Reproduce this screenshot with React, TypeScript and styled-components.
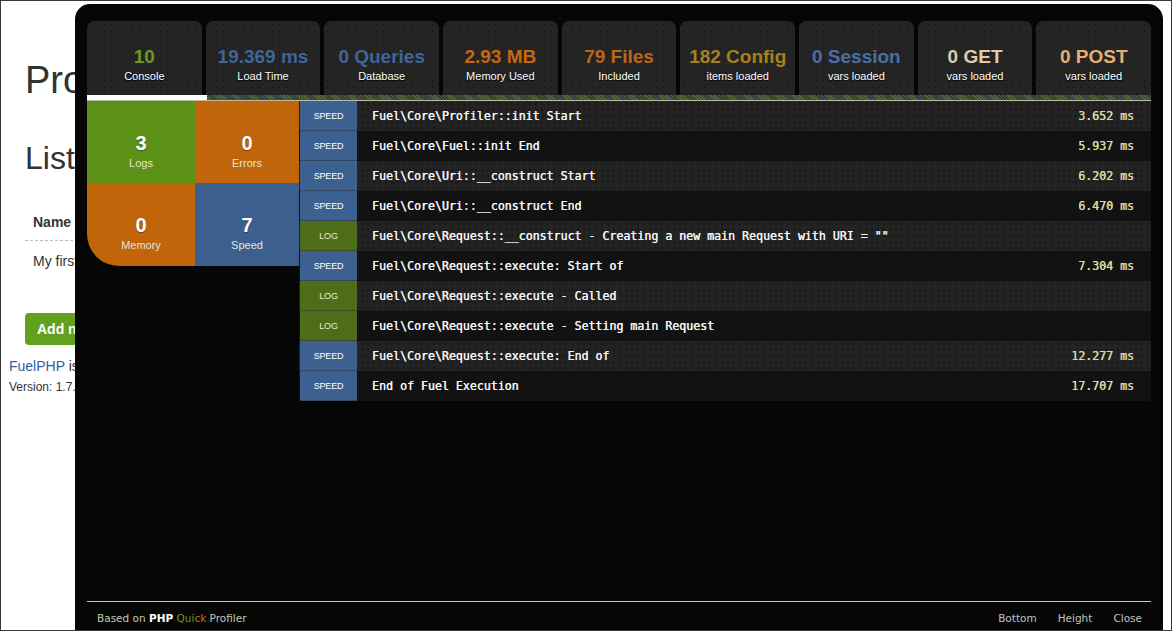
import React from 'react'
import styled, { createGlobalStyle } from 'styled-components'

type Entry = {
  kind: 'SPEED' | 'LOG'
  text: string
  time?: string
}

type Tab = {
  value: string
  label: string
  color: string
}

const tabs: Tab[] = [
  { value: '10', label: 'Console', color: '#6a9a1c' },
  { value: '19.369 ms', label: 'Load Time', color: '#3f6599' },
  { value: '0 Queries', label: 'Database', color: '#3f6599' },
  { value: '2.93 MB', label: 'Memory Used', color: '#c4690d' },
  { value: '79 Files', label: 'Included', color: '#b8661a' },
  { value: '182 Config', label: 'items loaded', color: '#a8801c' },
  { value: '0 Session', label: 'vars loaded', color: '#4a6fa2' },
  { value: '0 GET', label: 'vars loaded', color: '#dccdae' },
  { value: '0 POST', label: 'vars loaded', color: '#e6ae70' },
]

const entries: Entry[] = [
  { kind: 'SPEED', text: 'Fuel\\Core\\Profiler::init Start', time: '3.652' },
  { kind: 'SPEED', text: 'Fuel\\Core\\Fuel::init End', time: '5.937' },
  { kind: 'SPEED', text: 'Fuel\\Core\\Uri::__construct Start', time: '6.202' },
  { kind: 'SPEED', text: 'Fuel\\Core\\Uri::__construct End', time: '6.470' },
  {
    kind: 'LOG',
    text: 'Fuel\\Core\\Request::__construct - Creating a new main Request with URI = ""',
  },
  { kind: 'SPEED', text: 'Fuel\\Core\\Request::execute: Start of', time: '7.304' },
  { kind: 'LOG', text: 'Fuel\\Core\\Request::execute - Called' },
  { kind: 'LOG', text: 'Fuel\\Core\\Request::execute - Setting main Request' },
  { kind: 'SPEED', text: 'Fuel\\Core\\Request::execute: End of', time: '12.277' },
  { kind: 'SPEED', text: 'End of Fuel Execution', time: '17.707' },
]

const GlobalStyle = createGlobalStyle`
  html, body {
    margin: 0;
    padding: 0;
    background: #fff;
  }
`

const App: React.FC = () => {
  return (
    <Frame>
      <GlobalStyle />
      <Page>
        <PageTitle>Products</PageTitle>
        <PageSubtitle>Listing Products</PageSubtitle>
        <NameHead>Name</NameHead>
        <NameCell>My first product</NameCell>
        <AddButton>Add new Product</AddButton>
        <PageNote>
          <PageLink>FuelPHP</PageLink> is released under the MIT license.
        </PageNote>
        <PageVersion>Version: 1.7.2</PageVersion>
      </Page>

      <Profiler>
        <TabRow>
          {tabs.map(t => (
            <TabItem key={t.label + t.value}>
              <TabValue color={t.color}>{t.value}</TabValue>
              <TabLabel>{t.label}</TabLabel>
            </TabItem>
          ))}
        </TabRow>
        <Band>
          <ActiveMark />
        </Band>

        <Body>
          <SummaryGrid>
            <SummaryBox bg="#5d9017">
              <SummaryValue>3</SummaryValue>
              <SummaryLabel>Logs</SummaryLabel>
            </SummaryBox>
            <SummaryBox bg="#c1650a">
              <SummaryValue>0</SummaryValue>
              <SummaryLabel>Errors</SummaryLabel>
            </SummaryBox>
            <SummaryBox bg="#c1650a" rounded>
              <SummaryValue>0</SummaryValue>
              <SummaryLabel>Memory</SummaryLabel>
            </SummaryBox>
            <SummaryBox bg="#3c5f8f">
              <SummaryValue>7</SummaryValue>
              <SummaryLabel>Speed</SummaryLabel>
            </SummaryBox>
          </SummaryGrid>

          <LogTable>
            {entries.map((e, i) => (
              <LogRow key={i} alt={i % 2 === 1}>
                <KindCell kind={e.kind}>{e.kind}</KindCell>
                <MessageCell>{e.text}</MessageCell>
                {e.time && (
                  <TimeCell>
                    {e.time} <TimeUnit>ms</TimeUnit>
                  </TimeCell>
                )}
              </LogRow>
            ))}
          </LogTable>
        </Body>

        <Footer>
          <Credit>
            Based on <strong>PHP</strong> <QuickGreen>Qui</QuickGreen>
            <QuickOrange>ck</QuickOrange> Profiler
          </Credit>
          <FooterLinks>
            <FooterLink>Bottom</FooterLink>
            <FooterLink>Height</FooterLink>
            <FooterLink>Close</FooterLink>
          </FooterLinks>
        </Footer>
      </Profiler>
    </Frame>
  )
}

const Frame = styled.div`
  position: relative;
  width: 1172px;
  height: 631px;
  box-sizing: border-box;
  border: 1px solid #3a3a3a;
  overflow: hidden;
  background: #fff;
`

/* page behind the profiler */

const Page = styled.div`
  padding: 40px 0 0 24px;
  font-family: 'Liberation Sans', Arial, sans-serif;
  color: #333;
  white-space: nowrap;
`

const PageTitle = styled.h1`
  margin: 17px 0 0;
  font-size: 38px;
  font-weight: normal;
  line-height: 44px;
`

const PageSubtitle = styled.h2`
  margin: 38px 0 0;
  font-size: 32px;
  font-weight: normal;
  line-height: 36px;
`

const NameHead = styled.div`
  margin-top: 32px;
  padding: 6px 0 10px 8px;
  font-size: 14px;
  font-weight: bold;
  border-bottom: 1px dashed #bbb;
  width: 200px;
`

const NameCell = styled.div`
  padding: 12px 8px 9px;
  font-size: 14px;
`

const AddButton = styled.div`
  display: inline-block;
  margin-top: 35px;
  padding: 8px 12px;
  border-radius: 4px;
  background: #62a01e;
  color: #fff;
  font-size: 14px;
  font-weight: bold;
`

const PageNote = styled.p`
  margin: 13px 0 0 -16px;
  font-size: 14px;
`

const PageLink = styled.span`
  color: #2f5f9a;
`

const PageVersion = styled.div`
  margin: 6px 0 0 -16px;
  font-size: 12px;
`

/* profiler overlay */

const dots = `
  radial-gradient(circle, rgba(0, 0, 0, 0.55) 0.7px, transparent 1px)
`

const Profiler = styled.div`
  position: absolute;
  left: 74px;
  top: 3px;
  right: 8px;
  bottom: 0;
  display: flex;
  flex-direction: column;
  padding: 17px 12px 0 12px;
  background: #060606;
  border-radius: 15px 15px 0 0;
  font-family: 'Liberation Sans', Arial, sans-serif;
`

const TabRow = styled.div`
  display: flex;
  gap: 4px;
`

const TabItem = styled.div`
  flex: 1;
  height: 74px;
  box-sizing: border-box;
  padding-top: 26px;
  display: flex;
  flex-direction: column;
  align-items: center;
  background-color: #242424;
  background-image: ${dots};
  background-size: 7px 7px;
  border-radius: 7px 7px 0 0;
`

const TabValue = styled.div<{ color: string }>`
  color: ${p => p.color};
  font-size: 19px;
  font-weight: bold;
  line-height: 19px;
  white-space: nowrap;
`

const TabLabel = styled.div`
  margin-top: 4px;
  color: #fff;
  font-size: 11px;
  line-height: 13px;
  text-shadow: 0 1px 1px #000;
`

const Band = styled.div`
  height: 5px;
  display: flex;
  background-color: #3d4a2a;
  background-image: repeating-linear-gradient(
    45deg,
    #5a6e32 0 1px,
    #2b3444 1px 2px
  );
  border-bottom: 1px solid #b9bca2;
`

const ActiveMark = styled.div`
  width: 120px;
  background: #fff;
`

const Body = styled.div`
  flex: 1;
  display: flex;
  align-items: flex-start;
`

const SummaryGrid = styled.div`
  width: 212px;
  display: grid;
  grid-template-columns: 108px 104px;
  grid-template-rows: 82px 83px;
`

const SummaryBox = styled.div<{ bg: string; rounded?: boolean }>`
  display: flex;
  flex-direction: column;
  align-items: center;
  box-sizing: border-box;
  padding-top: 32px;
  background: ${p => p.bg};
  border-bottom-left-radius: ${p => (p.rounded ? '32px' : '0')};
`

const SummaryValue = styled.div`
  color: #fff;
  font-size: 20px;
  font-weight: bold;
  line-height: 20px;
  text-shadow: 0 1px 1px rgba(0, 0, 0, 0.4);
`

const SummaryLabel = styled.div`
  margin-top: 4px;
  color: #e4e4d8;
  font-size: 11px;
  line-height: 12px;
`

const LogTable = styled.div`
  flex: 1;
  display: flex;
  flex-direction: column;
`

const LogRow = styled.div<{ alt: boolean }>`
  height: 30px;
  display: flex;
  align-items: stretch;
  background-color: ${p => (p.alt ? '#191919' : '#232323')};
  background-image: ${p =>
    p.alt
      ? 'radial-gradient(circle, rgba(0,0,0,0.6) 0.6px, transparent 0.8px)'
      : 'radial-gradient(circle, rgba(0,0,0,0.5) 0.6px, transparent 0.9px)'};
  background-size: ${p => (p.alt ? '2px 2px' : '6px 6px')};
`

const KindCell = styled.div<{ kind: 'SPEED' | 'LOG' }>`
  width: 57px;
  margin-left: 1px;
  display: flex;
  align-items: center;
  justify-content: center;
  background: ${p => (p.kind === 'SPEED' ? '#3c6090' : '#4e6d18')};
  color: ${p => (p.kind === 'SPEED' ? '#fff' : '#e8eccc')};
  font-size: 9px;
  letter-spacing: -0.2px;
  border-bottom: 1px dotted rgba(0, 0, 0, 0.5);
  box-sizing: border-box;
`

const MessageCell = styled.div`
  flex: 1;
  display: flex;
  align-items: center;
  padding-left: 15px;
  color: #f4f4f4;
  font-family: 'DejaVu Sans Mono', 'Liberation Mono', monospace;
  font-size: 11.6px;
  white-space: nowrap;
  text-shadow: 0.35px 0 0 #f4f4f4;
`

const TimeCell = styled.div`
  display: flex;
  align-items: center;
  padding-right: 17px;
  color: #d9d9a2;
  font-family: 'DejaVu Sans Mono', 'Liberation Mono', monospace;
  font-size: 11.6px;
  white-space: pre;
  text-shadow: 0.35px 0 0 #d9d9a2;
`

const TimeUnit = styled.span`
  color: #e2cdb0;
`

const Footer = styled.div`
  height: 29px;
  box-sizing: border-box;
  display: flex;
  align-items: center;
  justify-content: space-between;
  padding: 3px 9px 0 10px;
  border-top: 1px solid #c9c9bd;
  font-family: 'DejaVu Sans', 'Liberation Sans', sans-serif;
  font-size: 10.5px;
  color: #c4c6b4;
`

const Credit = styled.div`
  strong {
    color: #fff;
  }
`

const QuickGreen = styled.span`
  color: #6a9a1c;
`

const QuickOrange = styled.span`
  color: #c8690d;
`

const FooterLinks = styled.div`
  display: flex;
  gap: 21px;
`

const FooterLink = styled.span`
  color: #bcc4c8;
`

export default App
